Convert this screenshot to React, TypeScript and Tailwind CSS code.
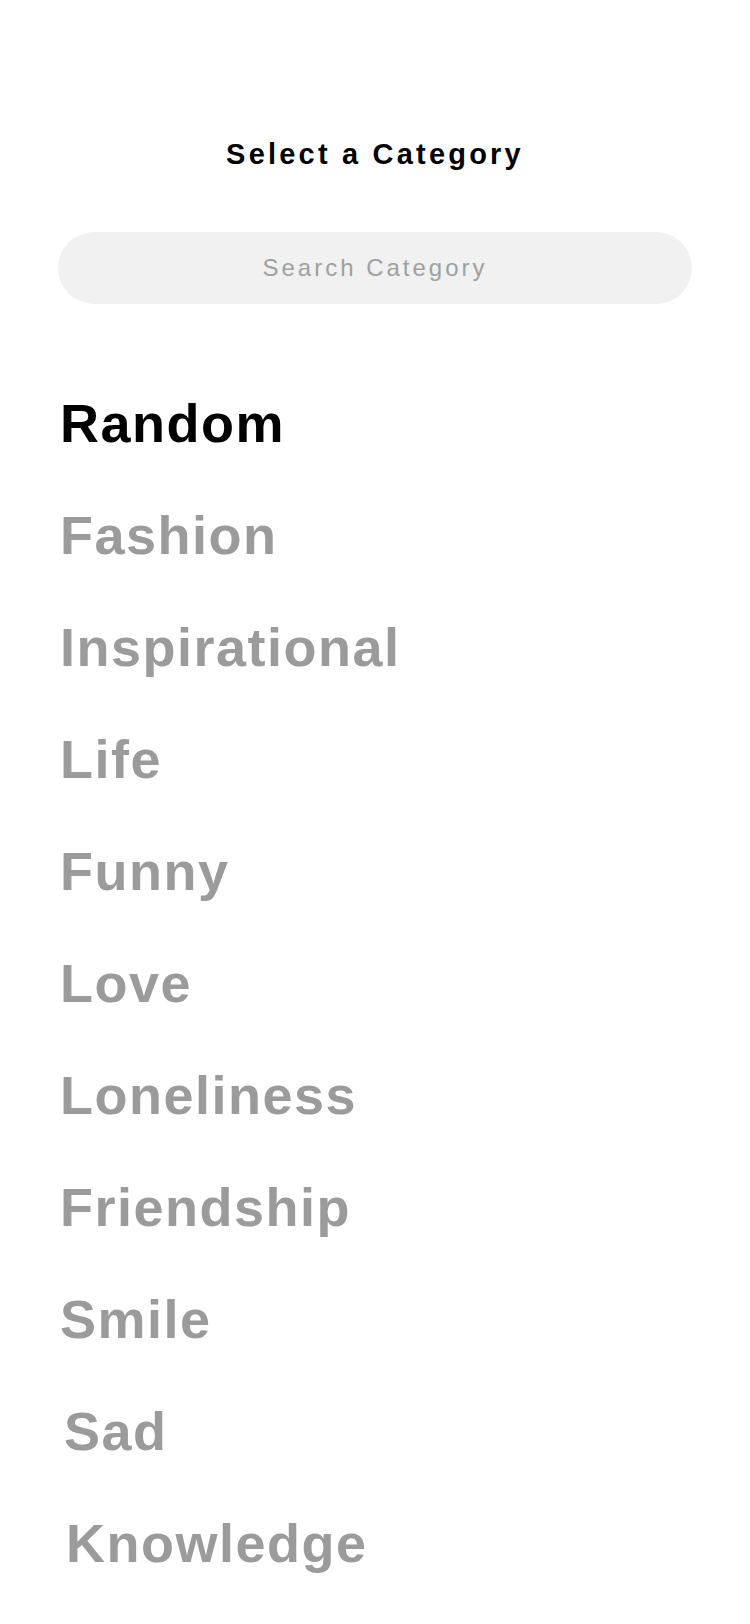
import { useState } from "react";

const CATEGORIES = [
  "Random",
  "Fashion",
  "Inspirational",
  "Life",
  "Funny",
  "Love",
  "Loneliness",
  "Friendship",
  "Smile",
  "Sad",
  "Knowledge",
];

// small per-item nudges seen in the design
const INDENT: Record<string, string> = {
  Sad: "pl-[4px]",
  Knowledge: "pl-[6px]",
};

export default function App() {
  const [selected, setSelected] = useState("Random");
  const [query, setQuery] = useState("");

  const shown = CATEGORIES.filter((c) =>
    c.toLowerCase().includes(query.toLowerCase())
  );

  return (
    <div className="min-h-[1624px] w-[750px] bg-white font-['Liberation_Sans',Arial,sans-serif]">
      {/* Header */}
      <h1 className="pt-[140px] text-center text-[29px] leading-[29px] font-bold tracking-[3.2px] text-black">
        Select a Category
      </h1>

      {/* Search */}
      <div className="mt-[63px] px-[58px]">
        <input
          value={query}
          onChange={(e) => setQuery(e.target.value)}
          placeholder="Search Category"
          className="h-[72px] w-full rounded-full bg-[#f1f1f1] text-center text-[24px] tracking-[3px] text-[#555] outline-none placeholder:text-[#a0a0a0]"
        />
      </div>

      {/* Category list */}
      <ul className="mt-[63px] px-[60px]">
        {shown.map((cat) => (
          <li key={cat} className={INDENT[cat] ?? ""}>
            <button
              onClick={() => setSelected(cat)}
              className={
                "text-left text-[54px] leading-[112px] font-bold tracking-[1.5px] " +
                (selected === cat ? "text-black" : "text-[#9b9b9b]")
              }
            >
              {cat}
            </button>
          </li>
        ))}
      </ul>
    </div>
  );
}
